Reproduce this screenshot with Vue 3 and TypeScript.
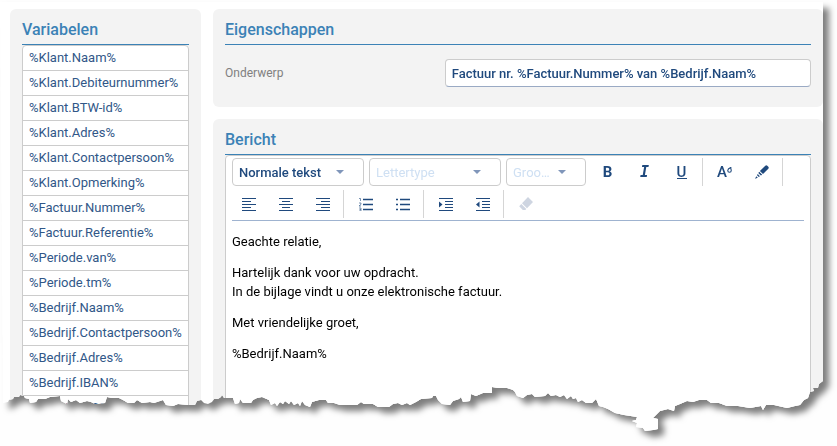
<script setup lang="ts">
import { ref } from 'vue'

const variables: string[] = [
  '%Klant.Naam%',
  '%Klant.Debiteurnummer%',
  '%Klant.BTW-id%',
  '%Klant.Adres%',
  '%Klant.Contactpersoon%',
  '%Klant.Opmerking%',
  '%Factuur.Nummer%',
  '%Factuur.Referentie%',
  '%Periode.van%',
  '%Periode.tm%',
  '%Bedrijf.Naam%',
  '%Bedrijf.Contactpersoon%',
  '%Bedrijf.Adres%',
  '%Bedrijf.IBAN%',
  '%Bedrijf.BIC%',
]

const subject = ref('Factuur nr. %Factuur.Nummer% van %Bedrijf.Naam%')

const dropdowns = [
  { label: 'Normale tekst', aria: 'Opmaak', wide: true, muted: false },
  { label: 'Lettertype', aria: 'Lettertype', wide: true, muted: true },
  { label: 'Groo…', aria: 'Grootte', wide: false, muted: true },
]

// Torn bottom edge of the sheet, left to right, on a design width of 823.
const sheetWidth = 823
const tear: [number, number][] = [
  [3, 403], [8, 402], [9, 400], [13, 399], [14, 397], [19, 397], [20, 395], [24, 396], [25, 398], [29, 399], [30, 403], [36, 402],
  [38, 399], [45, 399], [50, 397], [60, 396], [61, 401], [65, 403], [67, 404], [68, 399], [71, 402], [76, 400],
  [80, 403], [87, 401], [91, 402], [95, 404], [105, 403], [107, 397], [112, 398], [119, 398], [123, 400], [128, 403],
  [134, 403], [137, 400], [142, 403], [150, 402], [154, 403], [163, 400], [166, 405], [173, 406], [178, 404],
  [188, 405], [195, 405], [197, 401], [201, 400], [204, 403], [208, 404], [212, 402], [214, 399], [218, 399],
  [221, 397], [222, 395], [224, 398], [233, 398], [235, 404], [239, 403], [240, 399], [243, 403], [251, 403],
  [253, 400], [257, 398], [262, 397], [269, 400], [271, 405], [275, 403], [277, 406], [280, 402], [283, 404],
  [285, 401], [289, 404], [291, 401], [294, 405], [298, 403], [300, 406], [302, 401], [305, 405], [310, 407],
  [312, 402], [319, 400], [326, 400], [328, 403], [334, 403], [340, 405], [357, 405], [361, 402], [364, 404],
  [373, 404], [378, 407], [389, 407], [393, 404], [398, 403], [402, 405], [407, 403], [410, 405], [416, 402],
  [421, 399], [432, 398], [433, 396], [436, 396], [438, 400], [442, 404], [450, 405], [453, 401], [459, 399],
  [461, 397], [463, 402], [470, 401], [471, 394], [476, 396], [483, 393], [492, 393], [492, 387], [498, 388],
  [507, 388], [513, 390], [515, 392], [517, 396], [523, 398], [527, 395], [532, 394], [535, 397], [545, 396],
  [548, 393], [551, 396], [556, 395], [560, 397], [564, 395], [567, 399], [571, 396], [573, 399], [576, 398],
  [578, 402], [582, 400], [586, 403], [592, 403], [596, 399], [599, 406], [603, 407], [608, 409], [615, 413],
  [624, 415], [637, 417], [636, 420], [632, 421], [637, 423], [636, 427], [643, 428], [645, 431], [653, 430],
  [658, 429], [658, 419], [653, 418], [656, 415], [660, 411], [668, 409], [674, 411], [675, 406], [680, 404],
  [687, 401], [693, 402], [699, 400], [707, 400], [711, 403], [719, 403], [727, 406], [738, 406], [750, 408],
  [761, 406], [763, 410], [766, 405], [774, 405], [787, 408], [795, 406], [800, 405], [804, 400], [808, 398],
  [810, 392], [814, 391], [813, 388], [818, 388], [819, 384], [823, 381],
]

const edge = tear.map(([x, y]) => `${((x / sheetWidth) * 100).toFixed(3)}% ${y}px`).join(', ')
const clip = `polygon(0 2px, ${edge}, 100% 2px)`
</script>

<template>
  <div class="page">
    <div class="shadow">
      <main class="sheet" :style="{ clipPath: clip }">
        <section class="panel sidebar">
          <h2>Variabelen</h2>
          <ul class="variables">
            <li v-for="name in variables" :key="name">{{ name }}</li>
          </ul>
        </section>

        <div class="content">
          <section class="panel properties">
            <h2>Eigenschappen</h2>
            <div class="field">
              <label for="subject">Onderwerp</label>
              <input id="subject" v-model="subject" type="text" />
            </div>
          </section>

          <section class="panel message">
            <h2>Bericht</h2>
            <div class="editor">
              <div class="toolbar">
                <div
                  v-for="d in dropdowns"
                  :key="d.aria"
                  class="dropdown"
                  :class="{ wide: d.wide, muted: d.muted }"
                >
                  <select :aria-label="d.aria">
                    <option>{{ d.label }}</option>
                  </select>
                  <svg class="caret" viewBox="0 0 8 4"><path d="M0 0h8L4 4z" /></svg>
                </div>

                <button type="button" aria-label="Vet"><span class="glyph bold">B</span></button>
                <button type="button" aria-label="Cursief"><span class="glyph italic">I</span></button>
                <button type="button" aria-label="Onderstrepen"><span class="glyph underline">U</span></button>
                <i class="separator"></i>
                <button type="button" aria-label="Tekstkleur">
                  <span class="glyph color">A</span>
                  <svg class="drop" viewBox="0 0 6 7"><path d="M4.600.4C3 1 .9 2 .9 4a2.100 2.100 0 0 0 4.200 0C5.100 2.700 4.300 2.300 4.600.4z" fill="none" stroke="currentColor" stroke-width="1.300" /></svg>
                </button>
                <button type="button" aria-label="Achtergrondkleur">
                  <svg class="icon" viewBox="0 0 14 14">
                    <path d="M10.300.7Q11.300-.2 12.300.7L13.300 1.700Q14.200 2.700 13.300 3.700L8 9 4.900 5.900zM4.200 6.700 7.200 9.700 5.900 10.600 3.300 8zM2.700 9 4.900 11.200 3.800 12 2 10.200zM1.300 11.200 2.800 12.700 0 13.800z" fill="currentColor" />
                  </svg>
                </button>
                <i class="separator"></i>

                <button type="button" aria-label="Links uitlijnen">
                  <svg class="icon" viewBox="0 0 14 14"><path d="M0 1.500h14M0 4.500h9M0 7.500h14M0 10.500h9M0 13.500h14" /></svg>
                </button>
                <button type="button" aria-label="Centreren">
                  <svg class="icon" viewBox="0 0 14 14"><path d="M0 1.500h14M3 4.500h8M0 7.500h14M3 10.500h8M0 13.500h14" /></svg>
                </button>
                <button type="button" aria-label="Rechts uitlijnen">
                  <svg class="icon" viewBox="0 0 14 14"><path d="M0 1.500h14M5 4.500h9M0 7.500h14M5 10.500h9M0 13.500h14" /></svg>
                </button>
                <i class="separator"></i>
                <button type="button" aria-label="Genummerde lijst">
                  <svg class="icon list" viewBox="0 0 14 14">
                    <path d="M4 2.500h10M4 7.500h10M4 12.500h10" />
                    <path class="thin" d="M0 1.500h1.500v2.500M0 6h2v1.300L0 9h2M0 11h2v3H0M.5 12.500H2" />
                  </svg>
                </button>
                <button type="button" aria-label="Lijst met opsommingstekens">
                  <svg class="icon list" viewBox="0 0 14 14"><path d="M4 2.500h10M4 7.500h10M4 12.500h10M0 2.500h2M0 7.500h2M0 12.500h2" /></svg>
                </button>
                <i class="separator"></i>
                <button type="button" aria-label="Inspringing vergroten">
                  <svg class="icon" viewBox="0 0 14 14">
                    <path d="M0 1.500h14M6 4.500h8M6 7.500h8M6 10.500h8M0 13.500h14" />
                    <path class="fill" d="M0 4.500 3.500 7.500 0 10.500z" />
                  </svg>
                </button>
                <button type="button" aria-label="Inspringing verkleinen">
                  <svg class="icon" viewBox="0 0 14 14">
                    <path d="M0 1.500h14M6 4.500h8M6 7.500h8M6 10.500h8M0 13.500h14" />
                    <path class="fill" d="M3.500 4.500 0 7.500l3.500 3z" />
                  </svg>
                </button>
                <i class="separator"></i>
                <button type="button" aria-label="Opmaak wissen" disabled>
                  <svg class="icon" viewBox="0 0 14 14">
                    <path class="fill" d="M9 0 14 5 8 11.300 3 6.300zM2.300 7 7.300 12 6.300 13H3.800L.2 9.300z" />
                  </svg>
                </button>
              </div>

              <div class="body">
                <p>Geachte relatie,</p>
                <p>Hartelijk dank voor uw opdracht.<br />In de bijlage vindt u onze elektronische factuur.</p>
                <p>Met vriendelijke groet,</p>
                <p>%Bedrijf.Naam%</p>
              </div>
            </div>
          </section>
        </div>
      </main>
    </div>
  </div>
</template>

<style>
body {
  background: #fefefe;
}
</style>

<style scoped>
* {
  box-sizing: border-box;
}

.page {
  min-height: 100vh;
  padding-right: 14px;
  display: flex;
  overflow: hidden;
  font-family: Roboto, 'Liberation Sans', sans-serif;
  font-size: 13px;
  color: #1f497d;
}

.shadow {
  flex: 1;
  display: flex;
  min-width: 0;
  filter: drop-shadow(6px 6px 3px rgba(0, 0, 0, 0.5));
}

.sheet {
  flex: 1;
  display: flex;
  gap: 12px;
  min-width: 0;
  padding: 9px 0 0 10px;
  background: #fff;
}

.panel {
  padding: 12px;
  background: #f3f3f3;
  border-radius: 6px;
}

h2 {
  margin: 0;
  height: 24px;
  border-bottom: 1px solid #3b82b6;
  font-size: 16px;
  line-height: 17px;
  font-weight: 500;
  color: #3b82b6;
}

.sidebar {
  flex: none;
}

.variables {
  min-width: 167px;
  margin: 0;
  padding: 0;
  list-style: none;
  background: #fff;
  border: 1px solid #ccc;
  border-radius: 4px 4px 0 0;
}

.variables li {
  height: 25px;
  padding: 0 6px;
  border-bottom: 1px solid #ccc;
  line-height: 23px;
  color: #315788;
}

.content {
  flex: 1;
  min-width: 0;
  display: flex;
  flex-direction: column;
  gap: 12px;
}

.properties {
  padding-bottom: 20px;
}

.field {
  display: grid;
  grid-template-columns: 3fr 5fr;
  align-items: center;
  padding-top: 14px;
}

.field label {
  font-size: 12px;
  line-height: 16px;
  color: #808080;
}

.field input {
  width: 100%;
  min-width: 0;
  height: 28px;
  padding: 0 6px;
  border: 1px solid #ccc;
  border-bottom-color: #9aaac4;
  border-radius: 4px;
  background: #fff;
  font: 500 13px Roboto, 'Liberation Sans', sans-serif;
  color: #1f497d;
}

.message {
  flex: 1;
  display: flex;
  flex-direction: column;
}

.editor {
  flex: 1;
  padding: 2px 6px;
  border: 1px solid #ccc;
  border-radius: 4px;
  background: #fff;
}

.toolbar {
  display: flex;
  flex-wrap: wrap;
  row-gap: 4px;
  margin: 0 -2px;
  padding-bottom: 2px;
}

.toolbar button {
  width: 37px;
  height: 28px;
  padding: 0;
  border: 0;
  background: none;
  display: flex;
  align-items: center;
  justify-content: center;
  font: 500 15px Roboto, 'Liberation Sans', sans-serif;
  color: #1f497d;
}

.toolbar button:disabled {
  color: #ced5e1;
}

.dropdown {
  display: grid;
  align-items: center;
  width: 80px;
  height: 28px;
  margin: 0 3px 0 2px;
}

.dropdown.wide {
  width: 132px;
}

.dropdown select,
.caret {
  grid-area: 1 / 1;
}

.dropdown select {
  appearance: none;
  width: 100%;
  height: 28px;
  padding: 0 6px;
  border: 1px solid #ccc;
  border-radius: 4px;
  background: #fff;
  font: 500 13px Roboto, 'Liberation Sans', sans-serif;
  color: #1f497d;
}

.dropdown.muted select {
  font-weight: 400;
  color: #cfe0f3;
}

.caret {
  justify-self: end;
  width: 8px;
  height: 4px;
  margin-right: 20px;
  fill: #8096ba;
  pointer-events: none;
}

.separator {
  width: 1px;
  height: 28px;
  margin: 0 3px 0 2px;
  background: #d5d5d5;
}

.icon {
  width: 14px;
  height: 14px;
}

.icon path {
  stroke: currentColor;
  stroke-width: 1;
  fill: none;
}

.icon path[fill],
.icon path.fill {
  stroke: none;
  fill: currentColor;
}

.icon.list path {
  stroke-width: 1.500;
}

.icon.list path.thin {
  stroke-width: 0.600;
}

.glyph.bold {
  font-weight: 700;
}

.glyph.italic {
  font-family: 'DejaVu Sans Mono', monospace;
  font-weight: 700;
  font-style: italic;
}

.glyph.underline {
  width: 10px;
  line-height: 12px;
  border-bottom: 1px solid currentColor;
}

.drop {
  width: 5px;
  height: 6px;
  margin-bottom: 4px;
}

.body {
  padding-top: 11px;
  border-top: 1px solid #9fb3d0;
  line-height: 19px;
  color: #000;
}

.body p {
  margin: 0 0 12px;
}
</style>
